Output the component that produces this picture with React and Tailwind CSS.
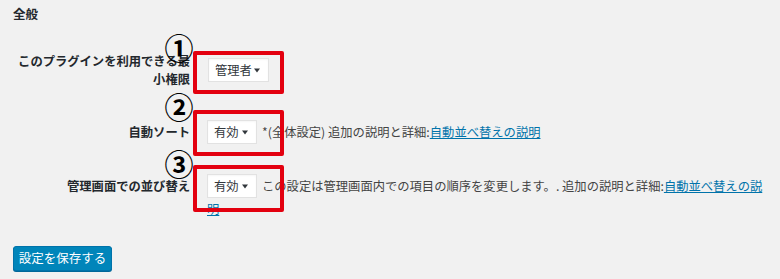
import React from "react";

const FONT = { fontFamily: '"Noto Sans CJK JP", "Noto Sans", sans-serif' };

const Arrow = () => (
  <svg width="6" height="5" viewBox="0 0 6 5" className="ml-auto">
    <path d="M0 0.5 L6 0.5 L3 4.5 Z" fill="#32373c" />
  </svg>
);

const Select = ({ value, width }) => (
  <span
    className={`inline-flex align-middle items-center h-[24px] pl-[6px] pr-[8px] bg-white border border-[#e2e2e2] text-[#32373c] shadow-[inset_0_1px_2px_rgba(0,0,0,0.04)] ${width}`}
  >
    <span>{value}</span>
    <Arrow />
  </span>
);

const Marker = ({ num, top, boxTop, boxHeight }) => (
  <>
    <span
      className="absolute left-[164px] w-[30px] text-center text-[29px] leading-[30px] font-bold text-black"
      style={{ top }}
    >
      {num}
    </span>
    <div
      className="absolute left-[193px] w-[91px] border-[4px] border-[#e3000f] rounded-[2px]"
      style={{ top: boxTop, height: boxHeight }}
    />
  </>
);

export default function App() {
  return (
    <div
      className="relative w-[780px] h-[279px] bg-[#f1f1f1] pl-[13px] pt-[6px] text-[12.3px] text-[#444] overflow-hidden"
      style={FONT}
    >
      <h2 className="text-[12.5px] leading-[16px] font-semibold text-[#23282d]">全般</h2>

      {/* row 1 */}
      <div className="flex mt-[30px]">
        <div className="w-[177px] text-right font-bold text-[#23282d] leading-[18px]">
          このプラグインを利用できる最
          <br />
          小権限
        </div>
        <div className="pl-[18px] pt-[6px] leading-[18px]">
          <Select value="管理者" width="w-[61px]" />
        </div>
      </div>

      {/* row 2 */}
      <div className="flex items-center mt-[32px]">
        <div className="w-[177px] text-right font-bold text-[#23282d] leading-[18px]">自動ソート</div>
        <div className="pl-[17px] leading-[18px]">
          <Select value="有効" width="w-[50px]" />
          <span className="ml-[5px] align-middle">
            *(全体設定) 追加の説明と詳細:
            <a className="text-[#0073aa] underline">自動並べ替えの説明</a>
          </span>
        </div>
      </div>

      {/* row 3 */}
      <div className="flex mt-[30px]">
        <div className="w-[177px] pt-[3px] text-right font-bold text-[#23282d] leading-[18px]">
          管理画面での並び替え
        </div>
        <div className="pl-[17px] w-[580px] leading-[18px]">
          <Select value="有効" width="w-[50px]" />
          <span className="ml-[5px] align-middle">
            この設定は管理画面内での項目の順序を変更します。. 追加の説明と詳細:
            <a className="text-[#0073aa] underline">自動並べ替えの説明</a>
          </span>
        </div>
      </div>

      <button className="mt-[28px] w-[99px] h-[25px] flex items-center justify-center rounded-[3px] bg-[#0085ba] border border-[#0073aa] shadow-[0_1px_0_#006799] text-white text-[12.5px]">
        設定を保存する
      </button>

      <Marker num="①" top={32} boxTop={51} boxHeight={43} />
      <Marker num="②" top={91} boxTop={110} boxHeight={46} />
      <Marker num="③" top={148} boxTop={165} boxHeight={47} />
    </div>
  );
}
